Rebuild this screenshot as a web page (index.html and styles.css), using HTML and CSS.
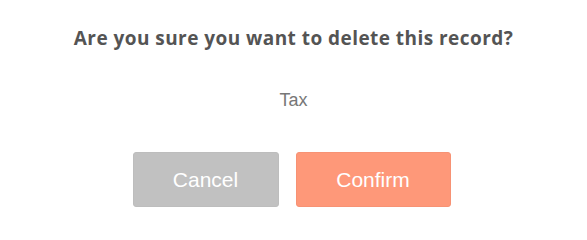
FILE: index.html
```html
<!DOCTYPE html>
<html lang="en">
<head>
<meta charset="utf-8">
<title>Delete record</title>
<link rel="stylesheet" href="styles.css">
</head>
<body>
<div class="dialog">
  <h2 class="dialog-title">Are you sure you want to delete this record?</h2>
  <p class="dialog-subject">Tax</p>
  <div class="dialog-actions">
    <button class="btn btn-cancel" type="button">Cancel</button>
    <button class="btn btn-confirm" type="button">Confirm</button>
  </div>
</div>
</body>
</html>
```

FILE: styles.css
```css
html, body {
  margin: 0;
  padding: 0;
  background: #ffffff;
}

.dialog {
  width: 587px;
  height: 229px;
  box-sizing: border-box;
  padding-top: 24px;
  display: flex;
  flex-direction: column;
  align-items: center;
}

.dialog-title {
  margin: 0;
  font-family: "Open Sans", "Liberation Sans", sans-serif;
  font-weight: 700;
  font-size: 19px;
  line-height: 28px;
  color: #545454;
  letter-spacing: 0.45px;
}

.dialog-subject {
  margin: 36px 0 0;
  font-family: "Liberation Sans", Arial, sans-serif;
  font-size: 18px;
  line-height: 24px;
  color: #777777;
}

.dialog-actions {
  margin: 40px 4px 0 0;
  display: flex;
  gap: 17px;
}

.btn {
  box-sizing: border-box;
  height: 55px;
  padding: 0;
  border-radius: 3px;
  font-family: "Liberation Sans", Arial, sans-serif;
  font-size: 21px;
  color: #ffffff;
  cursor: pointer;
}

.btn-cancel {
  width: 146px;
  background: #c1c1c1;
  border: 1px solid #bdbdbd;
}

.btn-confirm {
  width: 155px;
  background: #fe9879;
  border: 1px solid #f79274;
}
```
